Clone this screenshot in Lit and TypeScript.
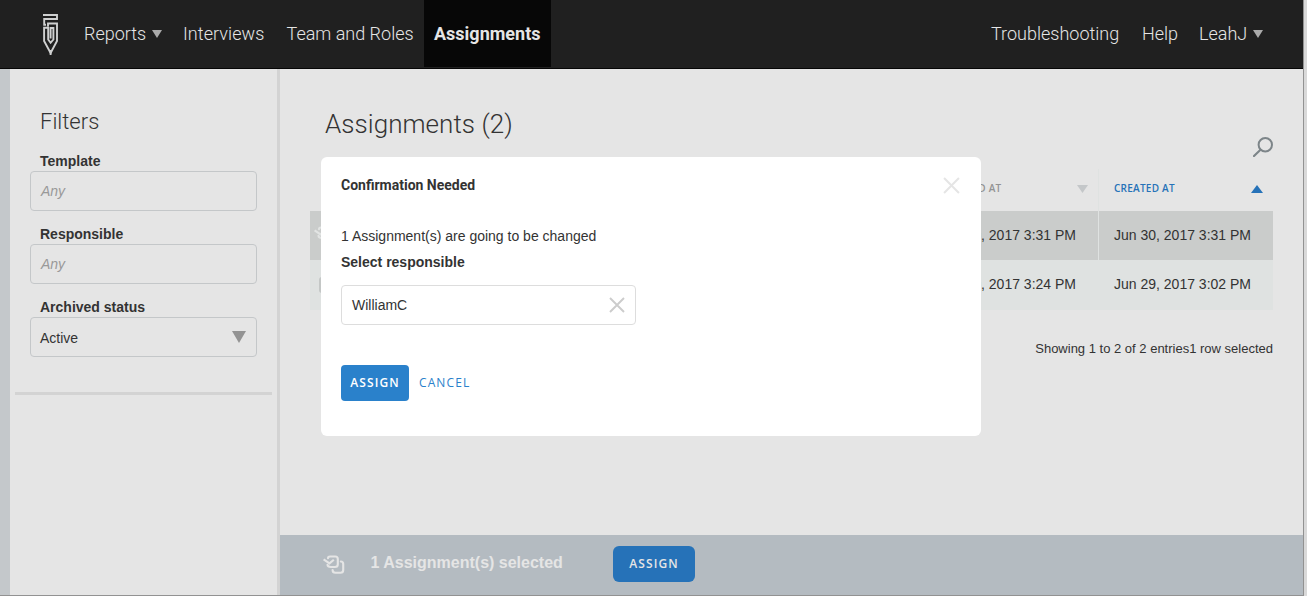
import { LitElement, html, css, svg } from "lit";
import { customElement } from "lit/decorators.js";

const batchIcon = html`<svg class="batch" width="24" height="20" viewBox="0 0 24 20" fill="none" stroke="currentColor" stroke-width="2.1" stroke-linecap="round" stroke-linejoin="round">
  <path d="M5 3.2C5 2 5.8 1.5 7 1.5H12.2C14.2 1.5 14.8 2.2 14.8 4V9.2C14.8 11.2 14 12 12 12H7.8C5.6 12 4.5 11.3 4.5 9.8"/>
  <path d="M17.8 6.5C19.6 6.5 20.2 7.2 20.2 9V15C20.2 17 19.5 17.8 17.5 17.8H12.5C10.3 17.8 9.6 17 9.6 15"/>
  <path d="M0.6 4.3L6.5 8.4L10.8 4.8" stroke-linecap="butt" stroke-linejoin="miter"/>
</svg>`;

const cross = (size: number) => html`<svg width=${size} height=${size} viewBox="0 0 16 16" fill="none" stroke="currentColor" stroke-width="1.9"><path d="M1 1L15 15M15 1L1 15"/></svg>`;

const triangle = (w: number, h: number, up = false) => html`<svg class="tri" width=${w} height=${h} viewBox="0 0 10 10" preserveAspectRatio="none" fill="currentColor">${up ? svg`<path d="M0 10H10L5 0Z"/>` : svg`<path d="M0 0H10L5 10Z"/>`}</svg>`;

@customElement("app-root")
export class AppRoot extends LitElement {
  static styles = css`
    :host { display: block; font-family: "Liberation Sans", Arial, sans-serif; font-size: 14px; color: #333; }
    * { box-sizing: border-box; }
    svg { display: block; flex: none; }
    .window { position: relative; width: 1307px; height: 596px; overflow: hidden; display: grid; grid-template-columns: 1303px 1px 3px; grid-template-rows: 595px 1px; background: #dcdcdc; }
    .edge { background: #929292; }
    .rim { background: #d9d9d9; }
    .base { grid-column: 1 / 3; background: #929292; }
    .app { display: grid; grid-template-rows: 69px 526px; }
    header { display: flex; background: #202020; border-bottom: 1px solid #060606; font-family: Roboto, sans-serif; font-size: 18px; font-weight: 300; color: #e5e5e5; padding-left: 43px; line-height: 67px; white-space: nowrap; }
    .logo { margin: 14px 23px 0 0; }
    .item { display: flex; align-items: center; height: 67px; }
    .item .tri { color: #aaa; margin-left: 6px; }
    .reports { width: 99px; }
    .interviews { width: 103.5px; letter-spacing: 0.06px; }
    .team { width: 137.5px; }
    .current { width: 127px; padding-left: 10px; background: #070707; font-weight: 700; }
    .trouble { width: 151px; margin-left: 440px; }
    .help { width: 57px; }
    .body { display: grid; grid-template-columns: 10px 270px 1023px; }
    .strip { background: #c4c8cb; }
    aside { background: #e5e5e5; border-right: 3px solid #d3d3d3; padding: 38px 0 0 5px; }
    .filters { padding: 0 20px 0 15px; }
    h2, h1 { margin: 0; font-family: Roboto, sans-serif; font-weight: 300; }
    h2 { font-size: 22px; line-height: 30px; padding-left: 10px; height: 45px; }
    .label { display: block; font-weight: 700; height: 19px; line-height: 18px; padding-left: 10px; }
    .field { display: flex; align-items: center; justify-content: space-between; height: 40px; margin-bottom: 14px; padding: 0 10px; border: 1px solid #c4c7c9; border-radius: 4px; }
    .any { color: #999; font-style: italic; }
    .status { padding-left: 9px; padding-top: 2px; }
    .status .tri { color: #939393; margin-top: -3px; }
    .rule { width: 257px; height: 3px; margin-top: 35px; background: #d3d3d3; }
    main { display: grid; grid-template-rows: 466px 60px; background: #e5e5e5; }
    .content { padding: 38px 30px 0; }
    h1 { font-size: 26px; line-height: 34px; height: 30px; padding-left: 15px; letter-spacing: 0.05px; }
    .search { display: flex; justify-content: flex-end; height: 32px; color: #7d8589; }
    .row { display: grid; grid-template-columns: 620px 169px 174px; height: 49px; line-height: 48px; }
    .row.head { height: 42px; font-family: "Open Sans", sans-serif; font-size: 10px; letter-spacing: 0.25px; font-weight: 600; color: #939393; }
    .cell { display: flex; align-items: center; white-space: nowrap; height: 100%; }
    .mid { justify-content: flex-end; padding-right: 22px; border-right: 1px solid #dfe2e1; }
    .mid, .last { padding-bottom: 1px; }
    .head .mid, .head .last { justify-content: space-between; padding-right: 10px; padding-bottom: 0; }
    .head .mid { padding-left: 8px; color: #939393; }
    .head .cell span { line-height: 20px; margin-top: -4px; }
    .head .tri { margin-top: -3px; }
    .head .mid .tri { color: #c4c7c9; }
    .head .last { color: #2672b8; }
    .last { padding-left: 15px; }
    .picked { background: #cacccb; color: #333; }
    .picked .batch { color: #e2e4e3; margin-left: 4px; }
    .plain { background: #dfe2e1; height: 50px; }
    .plain .mid { border-color: transparent; }
    .plain .cell { height: 49px; }
    .box { width: 16px; height: 16px; margin-left: 9px; border-radius: 3px; background: #c4c7c6; }
    .info { text-align: right; margin-top: 30px; line-height: 18px; font-size: 13px; }
    .bar { display: flex; align-items: center; background: #b4bbc1; color: #e5e5e5; padding-left: 43px; }
    .bar .batch { margin-right: 23.5px; margin-top: -1px; }
    .chosen { width: 242.5px; font-size: 16px; font-weight: 700; padding-bottom: 4px; }
    button { font-family: "Open Sans", sans-serif; font-size: 12px; font-weight: 600; letter-spacing: 1.1px; border: 0; border-radius: 4px; height: 36px; padding: 0 0 1px; color: #fff; background: #2a81cb; text-align: center; }
    .bar button { width: 82px; background: #2672b8; color: #e5e5e5; border-radius: 6px; margin-top: -2px; }
    .modal { position: absolute; left: 321px; top: 157px; width: 660px; height: 279px; padding: 18px 20px; background: #fff; border-radius: 6px; }
    .top { display: flex; justify-content: space-between; height: 52px; line-height: 20px; color: #e5e5e5; padding-right: 1px; }
    .top svg { margin-top: 2px; }
    .title { font-family: Roboto, sans-serif; font-weight: 700; color: #333; }
    .message { height: 24px; line-height: 18px; }
    .choose { font-weight: 700; line-height: 22px; height: 34px; }
    .picker { display: flex; justify-content: space-between; align-items: center; width: 295px; height: 40px; padding: 0 10px; border: 1px solid #ddd; border-radius: 4px; margin-bottom: 40px; }
    .picker svg { color: #ccc; }
    .actions { display: flex; gap: 10px; }
    .actions button { width: 68px; }
    .actions .cancel { width: 54px; background: none; color: #2a81cb; font-weight: 500; text-align: left; }
  `;

  render() {
    return html`<div class="window">
      <div class="app">
        <header>
          <svg class="logo" width="18" height="42" viewBox="0 0 18 42" fill="none" stroke="#cfd0d0" stroke-width="1.9">
            <path d="M0 1H14V5H1.2V10.8H3"/><path d="M5 12.5V9.5H14V27L7.6 39L1.1 27V13.8H5.2V25.5L7.6 28.8L10.4 25.5V14H7.6V24.5"/><path d="M7.6 36V41"/>
          </svg>
          <div class="item reports"><span>Reports</span>${triangle(10, 8)}</div>
          <div class="item interviews"><span>Interviews</span></div>
          <div class="item team"><span>Team and Roles</span></div>
          <div class="item current"><span>Assignments</span></div>
          <div class="item trouble"><span>Troubleshooting</span></div>
          <div class="item help"><span>Help</span></div>
          <div class="item"><span>LeahJ</span>${triangle(10, 8)}</div>
        </header>
        <div class="body">
          <div class="strip"></div>
          <aside>
            <div class="filters">
              <h2>Filters</h2>
              <span class="label">Template</span><div class="field any">Any</div>
              <span class="label">Responsible</span><div class="field any">Any</div>
              <span class="label">Archived status</span><div class="field status">Active${triangle(14, 12)}</div>
            </div>
            <div class="rule"></div>
          </aside>
          <main>
            <div class="content">
              <h1>Assignments (2)</h1>
              <div class="search"><svg width="20" height="20" viewBox="0 0 20 20" fill="none" stroke="currentColor" stroke-width="2"><circle cx="12.3" cy="7.8" r="6.7"/><path d="M7.5 12.8L1 19" stroke-width="2.2" stroke-linecap="round"/></svg></div>
              <div class="row head"><div></div><div class="cell mid"><span>UPDATED AT</span>${triangle(11, 8)}</div><div class="cell last"><span>CREATED AT</span>${triangle(12, 8, true)}</div></div>
              <div class="row picked"><div class="cell">${batchIcon}</div><div class="cell mid">Jun 30, 2017 3:31 PM</div><div class="cell last">Jun 30, 2017 3:31 PM</div></div>
              <div class="row plain"><div class="cell"><span class="box"></span></div><div class="cell mid">Jun 30, 2017 3:24 PM</div><div class="cell last">Jun 29, 2017 3:02 PM</div></div>
              <div class="info">Showing 1 to 2 of 2 entries1 row selected</div>
            </div>
            <div class="bar">${batchIcon}<span class="chosen">1 Assignment(s) selected</span><button>ASSIGN</button></div>
          </main>
        </div>
      </div>
      <div class="edge"></div><div class="rim"></div><div class="base"></div>
      <div class="modal">
        <div class="top"><span class="title">Confirmation Needed</span>${cross(17)}</div>
        <div class="message">1 Assignment(s) are going to be changed</div>
        <div class="choose">Select responsible</div>
        <div class="picker"><span>WilliamC</span>${cross(16)}</div>
        <div class="actions"><button>ASSIGN</button><button class="cancel">CANCEL</button></div>
      </div>
    </div>`;
  }
}
